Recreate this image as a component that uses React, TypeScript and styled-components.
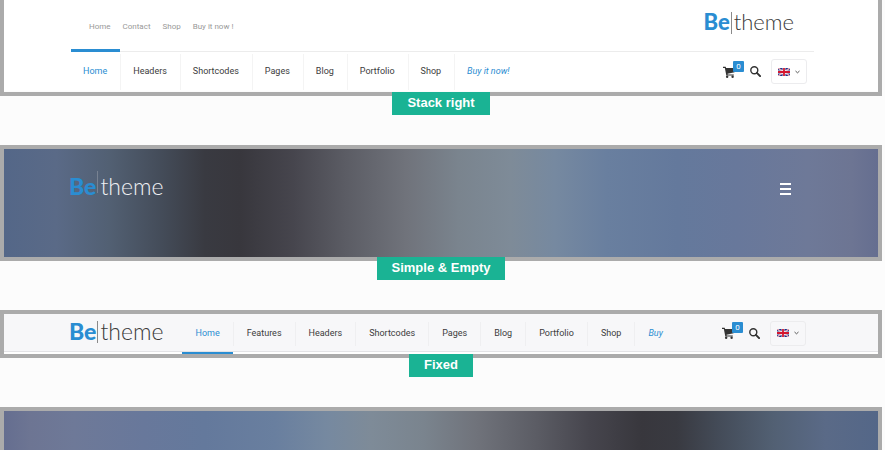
import React from "react";
import styled, { createGlobalStyle, css } from "styled-components";

const BLUE = "#2a8dd2";
const INK = "#3c3c3c";

const GlobalStyle = createGlobalStyle`
  *, *::before, *::after { box-sizing: border-box; }
  body { margin: 0; background: #fcfcfc; }
  button { font: inherit; border: 0; padding: 0; background: none; cursor: pointer; }
  a { color: inherit; text-decoration: none; }
  svg { display: block; }
`;

const Page = styled.main`
  display: flex;
  flex-direction: column;
  height: 100vh;
  overflow: hidden;
  padding-right: 3px;
  font-family: Roboto, "Liberation Sans", sans-serif;
  color: ${INK};
`;

const Example = styled.section`
  display: flex;
  flex-direction: column;
  flex: none;
  align-items: center;
  margin-bottom: 30px;
`;

const Frame = styled.div<{ $cutTop?: boolean }>`
  width: 100%;
  border: 4px solid #ababab;
  ${(p) => p.$cutTop && css`border-top: 0;`}
`;

const Caption = styled.h2`
  position: relative;
  margin: -4px 0 0;
  padding: 0 15px 2px;
  background: #1ab394;
  color: #ffffff;
  font: bold 13px/21px "Liberation Sans", Arial, sans-serif;
  white-space: nowrap;
`;

/* Logo */
const LogoLink = styled.a<{ $size: number; $light?: boolean }>`
  display: flex;
  align-items: center;
  font-family: Lato, "Open Sans", sans-serif;
  font-size: ${(p) => p.$size}px;
  line-height: 24px;
  font-weight: 300;
  color: ${(p) => (p.$light ? "#f0f1f4" : "#3a3a3a")};
`;

const LogoMark = styled.strong`
  font-weight: 900;
  color: ${BLUE};
`;

const LogoBar = styled.span<{ $raised?: boolean }>`
  width: 1px;
  height: 22px;
  margin: 0 2px 0 1px;
  align-self: ${(p) => (p.$raised ? "flex-start" : "center")};
  margin-top: ${(p) => (p.$raised ? "-3px" : "2px")};
  background: ${(p) => (p.$raised ? "#788292" : "#8a8a8a")};
`;

function Logo({ size, light }: { size: number; light?: boolean }) {
  return (
    <LogoLink href="#" $size={size} $light={light}>
      <LogoMark>Be</LogoMark>
      <LogoBar $raised={light} />
      <span>theme</span>
    </LogoLink>
  );
}

/* Navigation */
const NavList = styled.ul`
  display: flex;
  margin: 0;
  padding: 0;
  list-style: none;
`;

const NavItem = styled.li`
  display: flex;
  align-items: center;
`;

const StackLink = styled.a<{ $active?: boolean; $accent?: boolean }>`
  margin-top: -3px;
  padding: 0 13px 0 12px;
  border-top: 3px solid ${(p) => (p.$active ? BLUE : "transparent")};
  font-size: 9px;
  line-height: 39px;
  white-space: nowrap;
  color: ${(p) => (p.$active || p.$accent ? BLUE : INK)};
  font-style: ${(p) => (p.$accent ? "italic" : "normal")};
`;

const FixedLink = styled.a<{ $active?: boolean; $accent?: boolean }>`
  padding: 0 13px;
  border-bottom: 2px solid ${(p) => (p.$active ? BLUE : "transparent")};
  font-size: 9px;
  line-height: 38px;
  white-space: nowrap;
  color: ${(p) => (p.$active || p.$accent ? BLUE : INK)};
  font-style: ${(p) => (p.$accent ? "italic" : "normal")};
`;

const Divider = styled.span<{ $tall?: boolean }>`
  width: 1px;
  height: ${(p) => (p.$tall ? 36 : 24)}px;
  background: ${(p) => (p.$tall ? "#f4f4f4" : "#efeff1")};
`;

/* Tools */
const Tools = styled.div`
  display: flex;
  align-items: center;
  margin-left: auto;
`;

const CartButton = styled.button`
  position: relative;
  margin-right: 15px;
`;

const CartCount = styled.span`
  position: absolute;
  left: 10px;
  top: -5px;
  width: 11px;
  height: 11px;
  border-radius: 1px;
  background: ${BLUE};
  color: #ffffff;
  font-size: 8px;
  line-height: 11px;
  text-align: center;
`;

const SearchButton = styled.button`
  margin-right: 10px;
`;

const LanguageButton = styled.button`
  display: flex;
  align-items: center;
  gap: 5px;
  height: 25px;
  padding: 0 6px;
  border: 1px solid #ececee;
  border-radius: 3px;
`;

function ToolIcons() {
  return (
    <>
      <CartButton aria-label="Cart, 0 items">
        <svg width="12" height="12" viewBox="0 0 13 13" fill="#333">
          <path d="M0 .8h2.9l.5 1.5h9.2v4.5L4.9 8.3l.2.9h6.6v1.2H3.6L2 2.2H0z" />
          <circle cx="4.5" cy="11.7" r="1.3" />
          <circle cx="10.4" cy="11.7" r="1.3" />
        </svg>
        <CartCount>0</CartCount>
      </CartButton>
      <SearchButton aria-label="Search">
        <svg width="11" height="11" viewBox="0 0 11 11" fill="none" stroke="#333">
          <circle cx="4.3" cy="4.3" r="3.5" strokeWidth="1.4" />
          <path d="M6.9 6.9l3.2 3.2" strokeWidth="2" strokeLinecap="round" />
        </svg>
      </SearchButton>
      <LanguageButton aria-label="Language: English">
        <svg width="12" height="8" viewBox="0 0 12 8">
          <rect width="12" height="8" rx=".6" fill="#1f2f86" />
          <path d="M0 0l12 8M12 0L0 8" stroke="#fff" strokeWidth="1.3" />
          <path d="M0 0l12 8M12 0L0 8" stroke="#d4223a" strokeWidth=".5" />
          <path d="M6 0v8M0 4h12" stroke="#fff" strokeWidth="2.8" />
          <path d="M6 0v8M0 4h12" stroke="#d4142e" strokeWidth="1.8" />
        </svg>
        <svg width="5" height="4" viewBox="0 0 5 4" fill="none" stroke="#555">
          <path d="M.5 1l2 1.8 2-1.8" />
        </svg>
      </LanguageButton>
    </>
  );
}

/* Stack right header */
const StackHeader = styled.header`
  padding: 0 64px 0 67px;
  background: #ffffff;
`;

const StackTop = styled.div`
  display: flex;
  justify-content: space-between;
  align-items: flex-start;
  height: 52px;
  padding: 10px 20px 0 18px;
  border-bottom: 1px solid #ececec;
`;

const TopLinks = styled.nav`
  display: flex;
  gap: 12px;
  padding-top: 11px;
  font-size: 8px;
  line-height: 12px;
  color: #999999;
`;

const StackBar = styled.div`
  display: flex;
  height: 39px;
  margin-bottom: 1px;
  padding-right: 7px;
`;

/* Simple header */
const HAZE_STOPS = [
  "#546788 0%", "#5a6a87 6%", "#526073 12%", "#444c59 18%", "#393a41 23%",
  "#38373d 27%", "#46454d 33%", "#5b5c64 39%", "#70737b 46%", "#7a848e 52%",
  "#7e8b98 58%", "#7689a0 63%", "#697f9f 69%", "#64799c 77%", "#68789b 84%",
  "#6e7998 92%", "#6d7593 97%", "#656e90 100%",
].join(", ");

const HazeHeader = styled.header<{ $mirrored?: boolean }>`
  display: flex;
  justify-content: space-between;
  align-items: flex-start;
  min-height: 108px;
  padding: 25px 87px 0 65px;
  background: linear-gradient(${(p) => (p.$mirrored ? "270deg" : "90deg")}, ${HAZE_STOPS});
`;

const MenuButton = styled.button`
  display: flex;
  flex-direction: column;
  gap: 3px;
  width: 11px;
  margin-top: 9px;
`;

const MenuLine = styled.span`
  width: 11px;
  height: 2px;
  background: #ffffff;
`;

/* Fixed header */
const FixedHeader = styled.header`
  display: flex;
  align-items: flex-start;
  height: 40px;
  padding: 0 72px 0 65px;
  background: linear-gradient(#f7f7f9 37px, #e3e3e6 37px, #e3e3e6 38px, #ffffff 38px);
`;

const FixedLogo = styled.div`
  padding: 5px 19px 0 0;
`;

const FixedTools = styled(Tools)`
  height: 38px;
`;

const topLinks = ["Home", "Contact", "Shop", "Buy it now !"];
const stackLinks = ["Home", "Headers", "Shortcodes", "Pages", "Blog", "Portfolio", "Shop", "Buy it now!"];
const fixedLinks = ["Home", "Features", "Headers", "Shortcodes", "Pages", "Blog", "Portfolio", "Shop", "Buy"];

function Nav({ links, kind }: { links: string[]; kind: "stack" | "fixed" }) {
  const Item = kind === "stack" ? StackLink : FixedLink;
  return (
    <nav>
      <NavList>
        {links.map((label, i) => (
          <NavItem key={label}>
            <Item href="#" $active={i === 0} $accent={i === links.length - 1}>
              {label}
            </Item>
            {i < links.length - 1 && <Divider $tall={kind === "stack"} />}
          </NavItem>
        ))}
      </NavList>
    </nav>
  );
}

export default function App() {
  return (
    <>
      <GlobalStyle />
      <Page>
        <Example>
          <Frame $cutTop>
            <StackHeader>
              <StackTop>
                <TopLinks>
                  {topLinks.map((label) => (
                    <a href="#" key={label}>{label}</a>
                  ))}
                </TopLinks>
                <Logo size={22} />
              </StackTop>
              <StackBar>
                <Nav links={stackLinks} kind="stack" />
                <Tools>
                  <ToolIcons />
                </Tools>
              </StackBar>
            </StackHeader>
          </Frame>
          <Caption>Stack right</Caption>
        </Example>

        <Example>
          <Frame>
            <HazeHeader>
              <Logo size={23} light />
              <MenuButton aria-label="Menu">
                <MenuLine />
                <MenuLine />
                <MenuLine />
              </MenuButton>
            </HazeHeader>
          </Frame>
          <Caption>Simple &amp; Empty</Caption>
        </Example>

        <Example>
          <Frame>
            <FixedHeader>
              <FixedLogo>
                <Logo size={23} />
              </FixedLogo>
              <Nav links={fixedLinks} kind="fixed" />
              <FixedTools>
                <ToolIcons />
              </FixedTools>
            </FixedHeader>
          </Frame>
          <Caption>Fixed</Caption>
        </Example>

        <Example>
          <Frame>
            <HazeHeader $mirrored />
          </Frame>
        </Example>
      </Page>
    </>
  );
}
